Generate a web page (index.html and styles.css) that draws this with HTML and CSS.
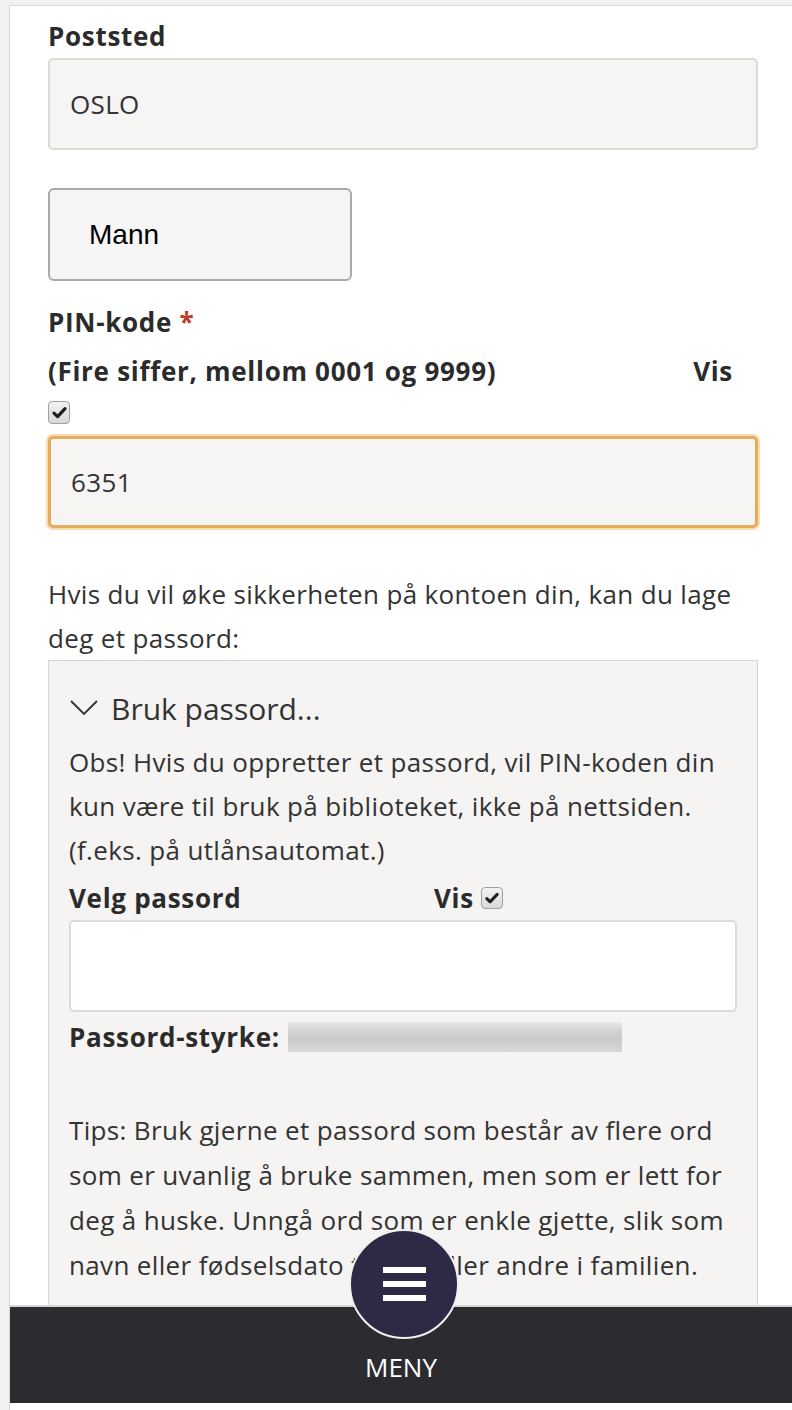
FILE: index.html
```html
<!DOCTYPE html>
<html lang="no">
<head>
<meta charset="utf-8">
<title>Registrering</title>
<link rel="stylesheet" href="styles.css">
</head>
<body>
<div class="frame">
  <div class="label label-first">Poststed</div>
  <div class="field field-readonly">OSLO</div>

  <div class="select">Mann</div>

  <div class="label label-pin">PIN-kode <span class="req">*</span></div>
  <div class="hint-row">
    <span>(Fire siffer, mellom 0001 og 9999)</span>
    <span class="vis">Vis</span>
  </div>
  <div class="check-line"><span class="checkbox"><svg viewBox="0 0 16 16" width="17" height="17"><path d="M2.8 8.6 L6.2 11.8 L13.2 4.4" fill="none" stroke="#1e1e1e" stroke-width="3" stroke-linecap="round" stroke-linejoin="round"/></svg></span></div>
  <div class="field field-focus">6351</div>

  <p class="intro">Hvis du vil øke sikkerheten på kontoen din, kan du lage deg et passord:</p>

  <div class="pw-box">
    <div class="summary">
      <svg class="chevron" viewBox="0 0 30 20" width="30" height="20"><path d="M2 3 L15 16 L28 3" fill="none" stroke="#333" stroke-width="1.8"/></svg>
      <span>Bruk passord...</span>
    </div>
    <p class="obs">Obs! Hvis du oppretter et passord, vil PIN-koden din kun være til bruk på biblioteket, ikke på nettsiden. (f.eks. på utlånsautomat.)</p>
    <div class="pw-label-row">
      <span class="pw-label">Velg passord</span>
      <span class="vis-inline">Vis <span class="checkbox checkbox-small"><svg viewBox="0 0 16 16" width="16" height="16"><path d="M2.8 8.6 L6.2 11.8 L13.2 4.4" fill="none" stroke="#1e1e1e" stroke-width="3" stroke-linecap="round" stroke-linejoin="round"/></svg></span></span>
    </div>
    <div class="field field-white"></div>
    <div class="strength-row">
      <span class="pw-label">Passord-styrke:</span>
      <span class="strength-bar"></span>
    </div>
    <p class="tips">Tips: Bruk gjerne et passord som består av flere ord som er uvanlig å bruke sammen, men som er lett for deg å huske. Unngå ord som er enkle gjette, slik som navn eller fødselsdato til deg eller andre i familien.</p>
  </div>
</div>

<div class="footer">
  <div class="menu-btn">
    <span class="bar"></span><span class="bar"></span><span class="bar"></span>
  </div>
  <div class="menu-text">MENY</div>
</div>
</body>
</html>
```
FILE: styles.css
```css
html, body {
  margin: 0;
  padding: 0;
}
body {
  background: #f1f1f1;
  font-family: "Open Sans", "Noto Sans", sans-serif;
  color: #333333;
  font-size: 26px;
  letter-spacing: 0.35px;
  height: 1410px;
  overflow: hidden;
}
.frame {
  margin: 5px 0 0 9px;
  border-top: 1px solid #d9d9d9;
  border-left: 1px solid #d9d9d9;
  background: #ffffff;
  padding: 8px 34px 40px 38px;
  min-height: 1400px;
}
.label {
  font-weight: 700;
  line-height: 44px;
  color: #2b2b2b;
  letter-spacing: 0.7px;
}
.field {
  box-sizing: border-box;
  height: 92px;
  border: 2px solid #dcdbd7;
  border-radius: 5px;
  background: #f6f5f3;
  padding: 0 20px;
  display: flex;
  align-items: center;
  color: #333;
}
.select {
  box-sizing: border-box;
  margin-top: 38px;
  width: 304px;
  height: 93px;
  border: 2px solid #aaaaaa;
  border-radius: 6px;
  background: #f6f6f6;
  padding-left: 39px;
  display: flex;
  align-items: center;
  font-family: "Liberation Sans", Arial, sans-serif;
  font-size: 28px;
  letter-spacing: 0;
  color: #000;
}
.label-pin {
  margin-top: 19px;
}
.req {
  color: #c0392b;
}
.hint-row {
  margin-top: 5px;
  display: flex;
  justify-content: space-between;
  font-weight: 700;
  letter-spacing: 0.7px;
  line-height: 44px;
  color: #2b2b2b;
  padding-right: 25px;
}
.check-line {
  margin-top: 8px;
  height: 23px;
}
.checkbox {
  box-sizing: border-box;
  display: inline-flex;
  align-items: center;
  justify-content: center;
  width: 22px;
  height: 23px;
  border: 1px solid #a0a0a0;
  border-radius: 4px;
  background: linear-gradient(#f2f2f2, #d8d8d8);
  vertical-align: top;
}
.field-focus {
  margin-top: 12px;
  border: 3px solid #e6ad5e;
  box-shadow: 0 0 0 2px rgba(246, 206, 140, 0.7);
}
.intro {
  margin: 44px 0 0;
  line-height: 44px;
}
.pw-box {
  border: 1px solid #d6d5d1;
  background: #f5f4f2;
  padding: 23px 20px 17px 20px;
}
.summary {
  display: flex;
  align-items: center;
  height: 48px;
  font-size: 30px;
  letter-spacing: 0;
}
.chevron {
  margin: 0 12px 0 0;
}
.obs {
  margin: 8px 0 0;
  line-height: 44px;
}
.pw-label-row {
  margin-top: 4px;
  display: flex;
  line-height: 44px;
}
.pw-label {
  font-weight: 700;
  letter-spacing: 0.7px;
  color: #2b2b2b;
}
.pw-label-row .pw-label {
  width: 365px;
}
.vis-inline {
  font-weight: 700;
  letter-spacing: 0.7px;
  color: #2b2b2b;
  display: inline-flex;
  align-items: center;
  gap: 7px;
}
.checkbox-small {
  width: 22px;
  height: 22px;
}
.field-white {
  background: #ffffff;
  border-color: #dcdbd7;
}
.strength-row {
  display: flex;
  align-items: center;
  gap: 8px;
  line-height: 44px;
  margin-top: 3px;
}
.strength-bar {
  display: block;
  width: 334px;
  height: 30px;
  background: linear-gradient(#e9e9e9 0%, #d6d6d6 25%, #c9c9c9 55%, #d9d9d9 100%);
}
.tips {
  margin: 49px 0 0;
  line-height: 45px;
}
.footer {
  position: fixed;
  left: 10px;
  right: 0;
  bottom: 7px;
  height: 96px;
  background: #2c2b30;
  border-top: 2px solid #d6d6d4;
}
.menu-btn {
  position: absolute;
  left: 339px;
  top: -78px;
  width: 106px;
  height: 106px;
  border-radius: 50%;
  background: #2e2a46;
  border: 2px solid #f0f0f0;
  display: flex;
  flex-direction: column;
  align-items: center;
  justify-content: center;
  gap: 8px;
}
.bar {
  display: block;
  width: 43px;
  height: 6px;
  background: #ffffff;
}
.menu-text {
  position: absolute;
  left: 0;
  right: 0;
  top: 40px;
  text-align: center;
  color: #ffffff;
  font-size: 26px;
  letter-spacing: 0;
  line-height: 40px;
}
```
